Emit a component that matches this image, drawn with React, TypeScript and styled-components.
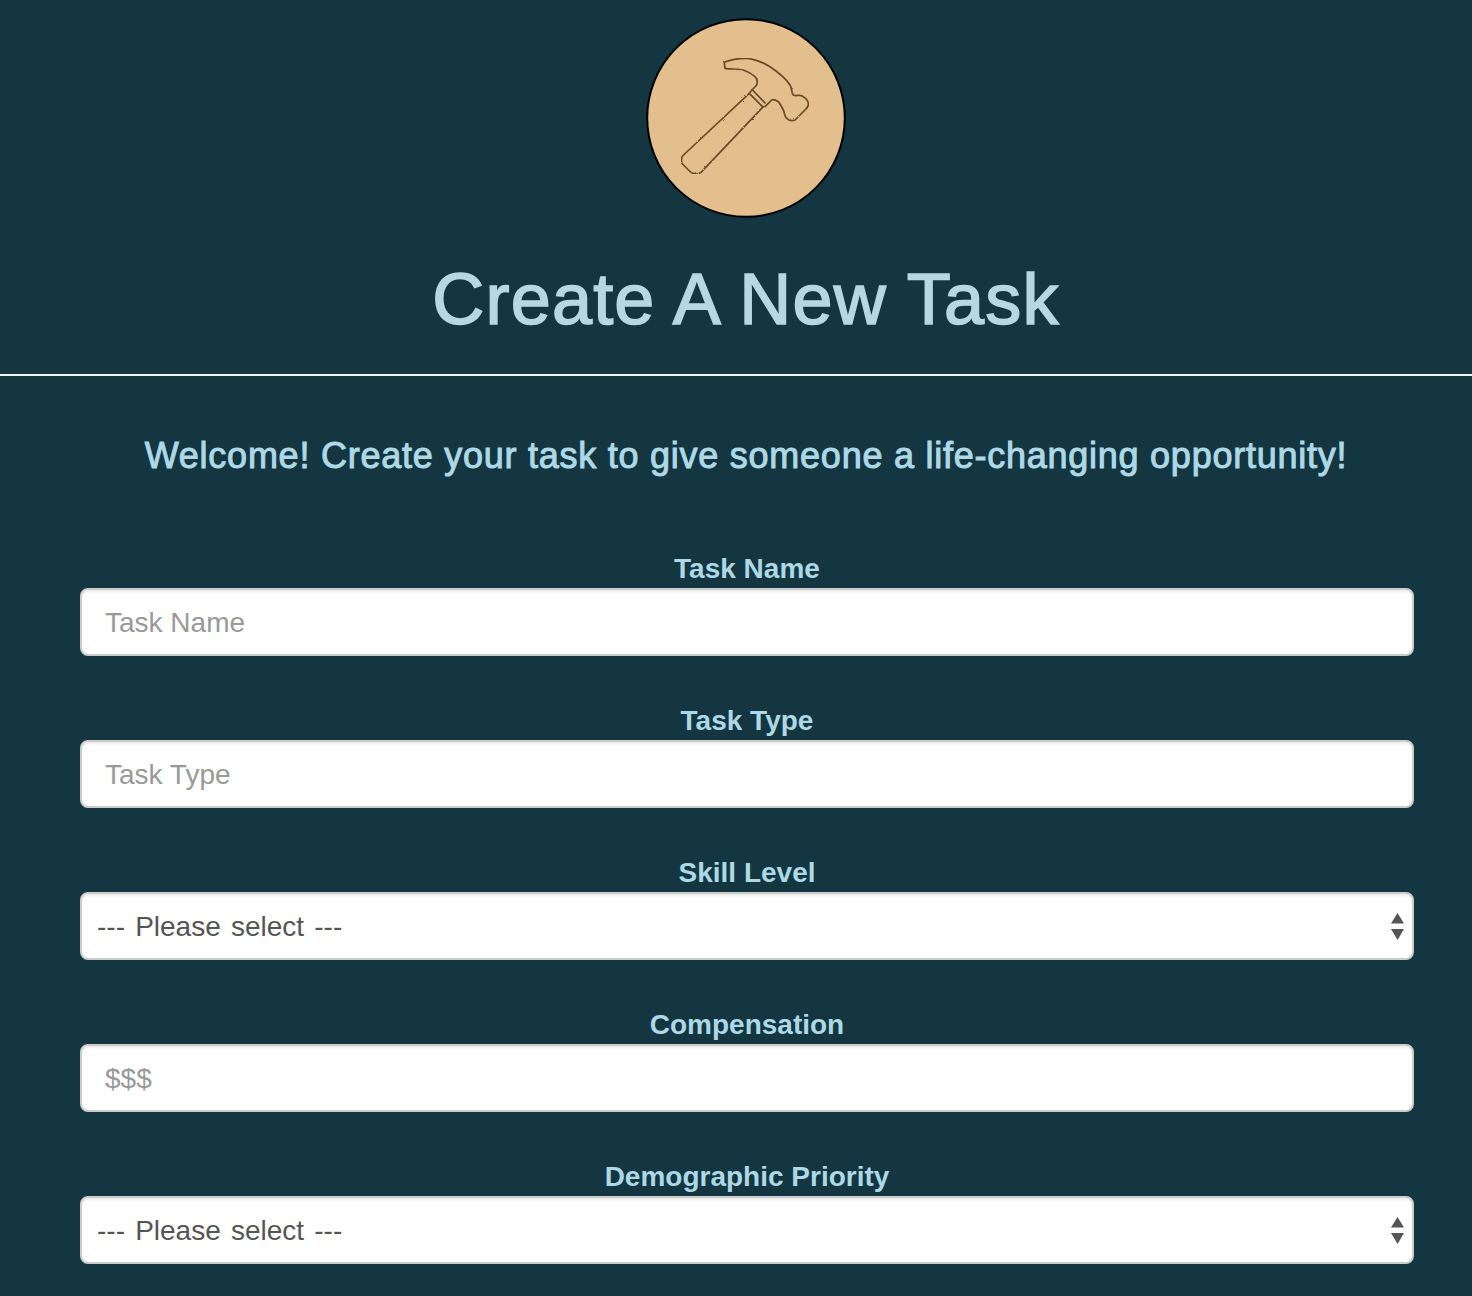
import React from 'react';
import styled, { createGlobalStyle } from 'styled-components';

const GlobalStyle = createGlobalStyle`
  html, body {
    margin: 0;
    padding: 0;
    background-color: #133640;
  }
  * {
    box-sizing: border-box;
  }
`;

const Page = styled.div`
  height: 1296px;
  overflow: hidden;
  background-color: #133640;
  font-family: 'Liberation Sans', Arial, sans-serif;
`;

const Header = styled.header`
  height: 376px;
  padding: 18px 0 0 20px;
  display: flex;
  flex-direction: column;
  align-items: center;
  border-bottom: 2px solid #f2f5f5;
`;

const Logo = styled.svg`
  display: block;
  width: 200px;
  height: 200px;
`;

const Title = styled.h1`
  margin: 38px 0 0;
  font-size: 72px;
  line-height: 86px;
  font-weight: 400;
  letter-spacing: 1.2px;
  color: #b6d8e3;
  -webkit-text-stroke: 1.6px #b6d8e3;
`;

const Welcome = styled.h3`
  margin: 60px 0 0;
  padding-left: 20px;
  height: 40px;
  text-align: center;
  font-size: 36px;
  line-height: 40px;
  font-weight: 400;
  letter-spacing: 0.75px;
  color: #add8e6;
  -webkit-text-stroke: 1px #add8e6;
`;

const Form = styled.form`
  margin-top: 72px;
  padding: 0 58px 0 80px;
  display: flex;
  flex-direction: column;
  gap: 44px;
`;

const Group = styled.div`
  display: flex;
  flex-direction: column;
`;

const Label = styled.label`
  height: 40px;
  text-align: center;
  font-size: 28px;
  line-height: 42px;
  font-weight: 700;
  color: #add8e6;
`;

const Input = styled.input`
  display: block;
  width: 100%;
  height: 68px;
  padding: 13px 23px 11px;
  font-family: inherit;
  font-size: 28px;
  color: #555;
  background: #fff;
  border: 2px solid #ccc;
  border-radius: 8px;
  box-shadow: inset 0 2px 2px rgba(0, 0, 0, 0.075);
  outline: none;

  &::placeholder {
    color: #999;
    opacity: 1;
  }
`;

const SelectWrap = styled.div`
  position: relative;
`;

const Select = styled.select`
  display: block;
  width: 100%;
  height: 68px;
  padding: 0 40px 0 15px;
  appearance: none;
  font-family: inherit;
  font-size: 28px;
  word-spacing: 2.4px;
  color: #555;
  background: #fff;
  border: 2px solid #ccc;
  border-radius: 8px;
  box-shadow: inset 0 2px 2px rgba(0, 0, 0, 0.075);
  outline: none;
`;

const Arrows = styled.svg`
  position: absolute;
  top: 21px;
  right: 10px;
  width: 13px;
  height: 27px;
  pointer-events: none;
`;

const HammerIcon: React.FC = () => (
  <Logo viewBox="0 0 200 200">
    <defs>
      <filter id="rough" x="0" y="0" width="100%" height="100%">
        <feTurbulence type="fractalNoise" baseFrequency="0.35" numOctaves="2" seed="4" />
        <feDisplacementMap in="SourceGraphic" scale="2" />
      </filter>
    </defs>
    <circle cx="100" cy="100" r="98.8" fill="#e2bf8c" stroke="#000" strokeWidth="2" />
    <g
      fill="none"
      stroke="#6b4a25"
      strokeWidth="1.7"
      strokeLinejoin="round"
      strokeLinecap="round"
      filter="url(#rough)"
    >
      <path d="M78.3 44.3 C85 41.5 93 40.2 100.7 40.3 C109 40.8 117 44.5 124 48.7 C132 54 139.5 60 144 67 C146 70.5 145.5 75.5 147.3 77 C150 78.5 153 76.5 155.7 77.7 C159 79.5 163 83 162.3 87 C162 89 160.500 90.500 159 92 L149 102 C146 103 142.5 102.5 140.7 100.3 C138 97.5 138.8 95 137.3 92 C135.5 89 134.5 85.5 132.3 83.7 C130 82.2 127.5 81 125.7 82 L119 88.7 M104 74.3 L110.7 67 C111.5 64 111 60.5 109 58.7 C105.5 55.5 101.5 53.5 97.3 52 C92 50.5 85 51.5 79 50.3 L78.3 44.3" />
      <path d="M103.3 75.3 L37 137.500 C35 139.500 35 144 36.500 146 L44 153.500 C47 156.500 52 156.800 55 154.300 L117.3 88.7" />
      <path d="M106 71.500 L119 85 M103.3 75.3 L116.500 88.7" />
    </g>
  </Logo>
);

const SelectField: React.FC<{ id: string; label: string }> = ({ id, label }) => (
  <Group>
    <Label htmlFor={id}>{label}</Label>
    <SelectWrap>
      <Select id={id} defaultValue="">
        <option value="">--- Please select ---</option>
      </Select>
      <Arrows viewBox="0 0 13 27">
        <path d="M6.5 0 L13 10.5 L0 10.5 Z M0 16 L13 16 L6.5 27 Z" fill="#555" />
      </Arrows>
    </SelectWrap>
  </Group>
);

const TextField: React.FC<{ id: string; label: string; placeholder: string }> = ({ id, label, placeholder }) => (
  <Group>
    <Label htmlFor={id}>{label}</Label>
    <Input id={id} type="text" placeholder={placeholder} />
  </Group>
);

const App: React.FC = () => {
  return (
    <Page>
      <GlobalStyle />
      <Header>
        <HammerIcon />
        <Title>Create A New Task</Title>
      </Header>
      <Welcome>Welcome! Create your task to give someone a life-changing opportunity!</Welcome>
      <Form>
        <TextField id="task-name" label="Task Name" placeholder="Task Name" />
        <TextField id="task-type" label="Task Type" placeholder="Task Type" />
        <SelectField id="skill-level" label="Skill Level" />
        <TextField id="compensation" label="Compensation" placeholder="$$$" />
        <SelectField id="demographic" label="Demographic Priority" />
      </Form>
    </Page>
  );
};

export default App;
